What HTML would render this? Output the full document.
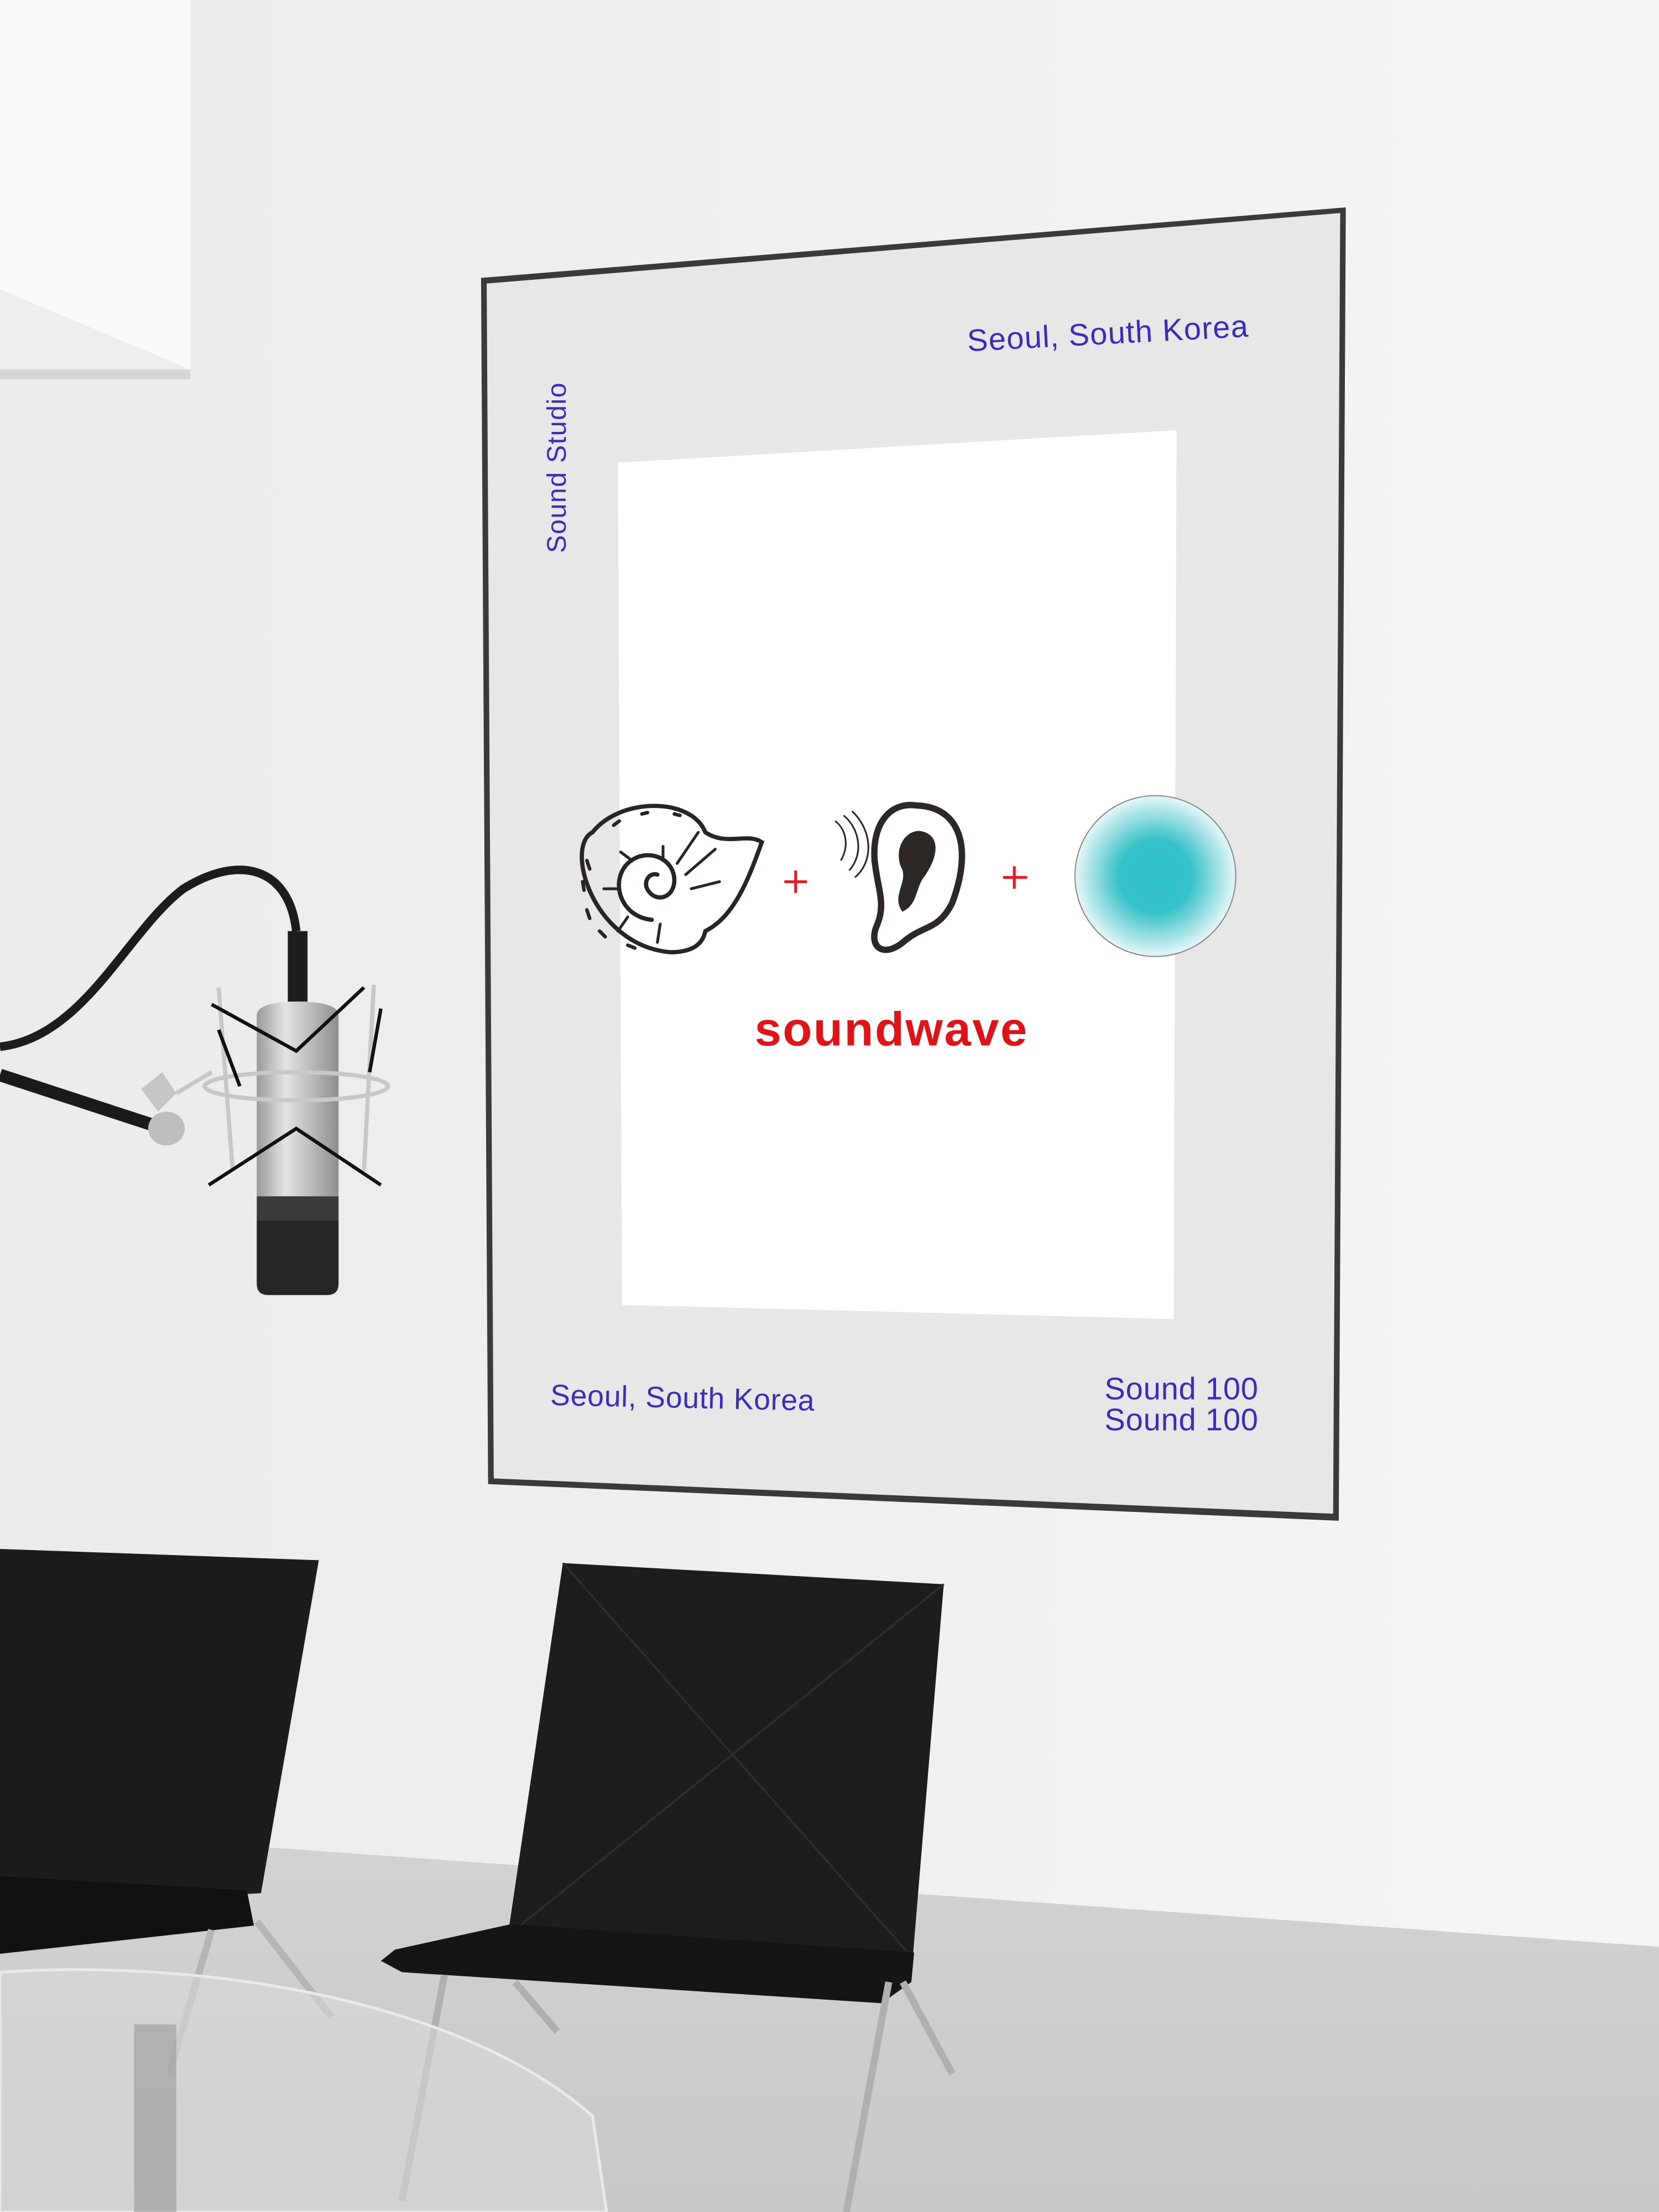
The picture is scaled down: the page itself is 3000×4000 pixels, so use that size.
<!DOCTYPE html>
<html><head><meta charset="utf-8"><style>html,body{margin:0;padding:0;background:#eee}svg{display:block}</style></head><body>
<svg width="3000" height="4000" viewBox="0 0 1176 1568" preserveAspectRatio="none" xmlns="http://www.w3.org/2000/svg">
<defs>
<linearGradient id="wall" x1="0" y1="0" x2="1" y2="0"><stop offset="0" stop-color="#ebebeb"/><stop offset="1" stop-color="#f5f5f5"/></linearGradient>
<linearGradient id="floor" x1="0" y1="0" x2="0" y2="1"><stop offset="0" stop-color="#d3d3d3"/><stop offset="1" stop-color="#c8c8c8"/></linearGradient>
<radialGradient id="ball"><stop offset="0" stop-color="#2fc0c8"/><stop offset="0.45" stop-color="#35c1c9"/><stop offset="1" stop-color="#e6f6f7"/></radialGradient>
<linearGradient id="mic" x1="0" y1="0" x2="1" y2="0"><stop offset="0" stop-color="#9a9a9a"/><stop offset="0.35" stop-color="#e4e4e2"/><stop offset="1" stop-color="#8e8e8c"/></linearGradient>
</defs>
<rect width="1176" height="1568" fill="url(#wall)"/>
<polygon points="0,1296 1176,1380 1176,1568 0,1568" fill="url(#floor)"/>
<!-- ledge -->
<rect x="0" y="0" width="135" height="262" fill="#fafafa"/>
<polygon points="0,205 135,262 0,268" fill="#eeeeee"/>
<rect x="0" y="262" width="135" height="7" fill="#d6d6d6"/>
<!-- poster frame -->
<polygon points="341,197 954,147 949,1078 346,1052" fill="#3a3a3c"/>
<polygon points="345,201 950,151 945,1073 350,1048" fill="#e7e7e7"/>
<polygon points="438,328 834,305 832,935 441,925" fill="#ffffff"/>
<g font-family="Liberation Sans, sans-serif" fill="#3a2db8">
<text x="686" y="249" font-size="22" letter-spacing="0.5" transform="rotate(-3 686 249)">Seoul, South Korea</text>
<text x="401" y="392" font-size="19" letter-spacing="0.6" transform="rotate(-90 401 392)">Sound Studio</text>
<text x="390" y="996" font-size="21" letter-spacing="0.3" transform="rotate(1.2 390 996)">Seoul, South Korea</text>
<text x="783" y="992" font-size="22" letter-spacing="0.3">Sound 100</text>
<text x="783" y="1014" font-size="22" letter-spacing="0.3">Sound 100</text>
</g>
<!-- shell -->
<g fill="none" stroke="#2a2424" stroke-linecap="round">
<path d="M475,675 C420,670 400,600 420,590 C440,565 490,565 500,590 C515,600 530,590 540,597 C530,625 520,650 500,660 C498,670 490,675 475,675 Z" stroke-width="3"/>
<path d="M462,652 C440,650 432,625 445,612 C458,600 478,608 478,624 C478,636 466,640 460,632 C455,626 460,618 466,620" stroke-width="3"/>
<path d="M495,590 L480,612 M507,602 L486,620 M510,625 L490,630 M470,600 L470,610 M448,610 L440,604 M438,630 L428,630 M445,650 L438,660 M468,655 L466,668" stroke-width="2"/>
<path d="M416,610 l2,6 M413,625 l1,6 M416,645 l2,6 M425,660 l4,4 M445,670 l5,2 M435,585 l4,-3 M455,577 l4,-1 M478,577 l4,1" stroke-width="2.5"/>
</g>
<!-- plus signs -->
<g stroke="#e31a22" stroke-width="2"><path d="M556,625 h16 M564,617 v16"/><path d="M711,622 h17 M719,614 v16"/></g>
<!-- ear -->
<g fill="none" stroke="#2d2725">
<path d="M592,582 C600,588 602,600 596,610 M598,578 C610,588 612,606 602,617 M604,575 C618,588 620,610 606,622" stroke-width="1.2"/>
<path d="M650,571 C630,568 618,585 620,610 C622,630 628,640 622,655 C615,670 625,680 640,668 C655,655 665,660 675,640 C690,600 680,572 650,571 Z" stroke-width="4.5"/>
<path d="M652,590 C640,590 635,605 640,615 C645,625 633,635 640,645 C650,640 648,628 655,620 C665,605 665,592 652,590 Z" fill="#2d2725" stroke-width="2"/>
</g>
<!-- ball -->
<circle cx="819" cy="621" r="57" fill="url(#ball)" stroke="#8a8a8a" stroke-width="0.8"/>
<text x="632" y="741" text-anchor="middle" font-family="Liberation Sans, sans-serif" font-weight="bold" font-size="34" letter-spacing="1" fill="#e01418">soundwave</text>
<!-- mic -->
<path d="M0,742 C60,735 90,660 130,630 C170,605 205,615 210,660" fill="none" stroke="#1c1c1c" stroke-width="6"/>
<path d="M0,762 L110,798" stroke="#1a1a1a" stroke-width="9"/>
<ellipse cx="118" cy="800" rx="13" ry="12" fill="#bdbdbd"/>
<path d="M100,772 L115,760 L125,775 L112,788 Z" fill="#c6c6c6"/>
<rect x="204" y="660" width="14" height="50" fill="#1e1e1e"/>
<path d="M182,720 Q182,710 211,710 Q240,710 240,720 L240,848 L182,848 Z" fill="url(#mic)"/>
<rect x="182" y="848" width="58" height="17" fill="#3a3a3a"/>
<path d="M182,865 h58 v45 q0,8 -8,8 h-42 q-8,0 -8,-8 Z" fill="#262626"/>
<g stroke="#c8c8c8" stroke-width="3" fill="none"><ellipse cx="210" cy="770" rx="65" ry="10"/><path d="M155,700 L165,830 M265,698 L258,830 M150,760 L125,775"/></g>
<g stroke="#111" stroke-width="2.5" fill="none"><path d="M150,712 L210,745 L258,700 M148,840 L210,800 L270,840 M155,730 L170,770 M270,715 L262,760"/></g>
<!-- left chair -->
<polygon points="0,1098 226,1106 185,1342 0,1352" fill="#1c1c1c"/>
<polygon points="0,1330 175,1340 180,1365 0,1385" fill="#111"/>
<g stroke="#b5b5b5" stroke-width="5"><path d="M150,1368 L120,1470 M182,1362 L235,1430"/></g>
<!-- right chair -->
<polygon points="399,1108 669,1123 647,1388 360,1372" fill="#1d1d1d"/>
<path d="M399,1108 L647,1388 M669,1123 L360,1372" stroke="#2c2c2c" stroke-width="1.5"/>
<polygon points="280,1382 362,1364 648,1384 646,1405 625,1420 285,1398 270,1390" fill="#151515"/>
<g stroke="#b0b0b0" stroke-width="5" fill="none"><path d="M315,1400 L285,1560 M365,1405 L395,1440 M630,1405 L600,1568 M640,1405 L675,1470"/></g>
<!-- glass table -->
<path d="M0,1398 C150,1388 330,1420 420,1500 L430,1568 L0,1568 Z" fill="#d9dbdb" fill-opacity="0.55" stroke="#eaeaea" stroke-width="2"/>
<rect x="95" y="1435" width="30" height="133" fill="#9a9a9a" fill-opacity="0.6"/>
</svg>
</body></html>
